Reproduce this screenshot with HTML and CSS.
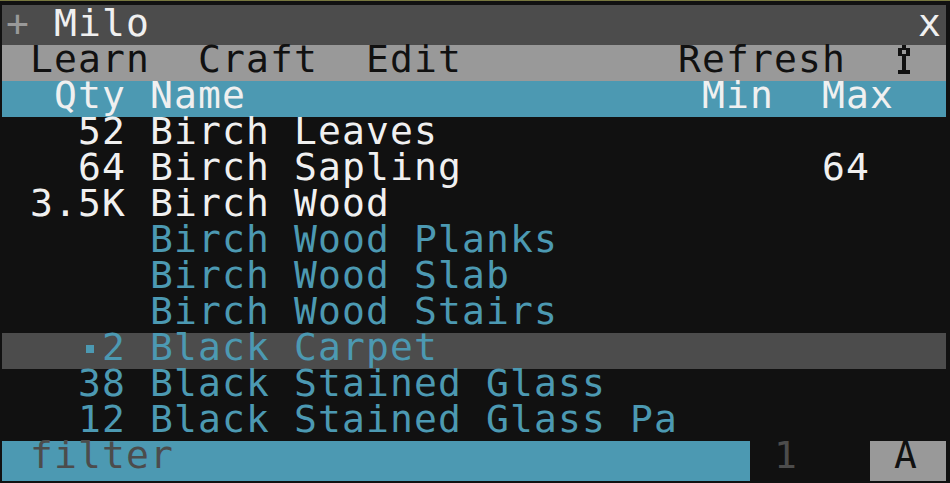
FILE: index.html
```html
<!DOCTYPE html>
<html>
<head>
<meta charset="utf-8">
<link rel="stylesheet" href="styles.css">
</head>
<body>
<div class="topline"></div>
<div class="screen">
  <div class="row title">
    <span class="plus">+</span><span class="cell"></span><span class="name-t">Milo</span>
    <span class="close">x</span>
  </div>
  <div class="row menu">
    <span class="item">Learn</span>
    <span class="item">Craft</span>
    <span class="item">Edit</span>
    <span class="item refresh">Refresh</span>
    <span class="icon"><svg width="24" height="36" viewBox="0 0 24 36"><rect x="8" y="0" width="4" height="3" fill="#111111"/><path d="M4 3h12v8H4z M8 5v4h4V5z" fill="#111111" fill-rule="evenodd"/><rect x="8" y="11" width="4" height="14" fill="#111111"/><rect x="4" y="25" width="12" height="4" fill="#111111"/></svg></span>
  </div>
  <div class="row grid header">
    <span class="qty">Qty</span><span class="nm">Name</span><span class="mn">Min</span><span class="mx">Max</span>
  </div>
  <div class="row grid white">
    <span class="qty">52</span><span class="nm">Birch Leaves</span><span class="mn"></span><span class="mx"></span>
  </div>
  <div class="row grid white">
    <span class="qty">64</span><span class="nm">Birch Sapling</span><span class="mn"></span><span class="mx">64</span>
  </div>
  <div class="row grid white">
    <span class="qty">3.5K</span><span class="nm">Birch Wood</span><span class="mn"></span><span class="mx"></span>
  </div>
  <div class="row grid cyan">
    <span class="qty"></span><span class="nm">Birch Wood Planks</span><span class="mn"></span><span class="mx"></span>
  </div>
  <div class="row grid cyan">
    <span class="qty"></span><span class="nm">Birch Wood Slab</span><span class="mn"></span><span class="mx"></span>
  </div>
  <div class="row grid cyan">
    <span class="qty"></span><span class="nm">Birch Wood Stairs</span><span class="mn"></span><span class="mx"></span>
  </div>
  <div class="row grid cyan selected">
    <span class="qty"><span class="mark"></span>2</span><span class="nm">Black Carpet</span><span class="mn"></span><span class="mx"></span>
  </div>
  <div class="row grid cyan">
    <span class="qty">38</span><span class="nm">Black Stained Glass</span><span class="mn"></span><span class="mx"></span>
  </div>
  <div class="row grid cyan">
    <span class="qty">12</span><span class="nm">Black Stained Glass Pa</span><span class="mn"></span><span class="mx"></span>
  </div>
  <div class="row bottom">
    <div class="seg filter"><span class="ph">filter</span></div>
    <div class="seg page"><span class="pn">1</span></div>
    <div class="seg mode"><span class="btn">A</span></div>
  </div>
</div>
</body>
</html>
```
FILE: styles.css
```css
html, body {
  margin: 0;
  padding: 0;
  background: #111111;
  width: 950px;
  height: 483px;
  overflow: hidden;
}

.topline {
  height: 1px;
  background: #77773f;
}

.screen {
  margin: 4px 0 0 2px;
  width: 944px;
  display: flex;
  flex-direction: column;
  font-family: "DejaVu Sans Mono", "Liberation Mono", monospace;
  font-size: 38px;
  letter-spacing: 1.122px;
  line-height: 29.7px;
  white-space: nowrap;
}

.row {
  height: 36px;
  padding: 0 4px;
  display: flex;
  align-items: flex-start;
}

.cell {
  display: inline-block;
  width: 24px;
}

.title {
  height: 36px;
  padding-top: 4px;
  background: #4c4c4c;
  color: #f0f0f0;
}
.title .plus { color: #999999; }
.title .close { margin-left: auto; width: 24px; }

.menu {
  background: #999999;
  color: #111111;
  padding-left: 28px;
  padding-right: 28px;
  gap: 48px;
}
.menu .refresh { margin-left: auto; }
.menu .icon {
  display: block;
  width: 24px;
  height: 36px;
  line-height: 0;
}
.menu .icon svg { display: block; }

.grid {
  display: grid;
  grid-template-columns: 120px 576px 120px 120px;
  column-gap: 0;
}
.grid .qty { display: flex; justify-content: flex-end; }
.grid .nm { padding-left: 24px; }

.header {
  background: #4c99b2;
  color: #f0f0f0;
}

.white { background: #111111; color: #f0f0f0; }
.cyan { background: #111111; color: #4c99b2; }
.selected { background: #4c4c4c; }

.mark {
  display: block;
  width: 24px;
  height: 29.7px;
  position: relative;
}
.mark::before {
  content: "";
  position: absolute;
  left: 8px;
  top: 12px;
  width: 8px;
  height: 8px;
  background: #4c99b2;
}

.bottom {
  height: 40px;
  padding: 0;
}
.seg {
  height: 40px;
  display: flex;
  align-items: flex-start;
  box-sizing: border-box;
}
.filter {
  width: 748px;
  padding-left: 28px;
  background: #4c99b2;
  color: #4c4c4c;
}
.page {
  width: 120px;
  padding-left: 24px;
  background: #111111;
  color: #4c4c4c;
}
.mode {
  width: 76px;
  padding-left: 24px;
  background: #999999;
  color: #111111;
}
```
